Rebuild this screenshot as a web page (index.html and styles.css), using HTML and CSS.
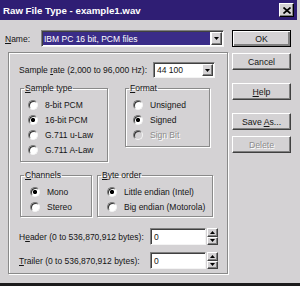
FILE: index.html
```html
<!DOCTYPE html>
<html lang="en">
<head>
    <meta charset="UTF-8">
    <title>Raw File Type</title>
    <link rel="stylesheet" href="styles.css">
</head>
<body>
    <div class="window">
        <div class="titlebar">
            <span class="title">Raw File Type - example1.wav</span>
            <span class="close">
                <svg width="8" height="7" viewBox="0 0 8 7"><path d="M0.5 0.5L7.5 6.5M7.5 0.5L0.5 6.5" stroke="#000" stroke-width="1.7"/></svg>
            </span>
        </div>
        <div class="content">
            <div class="main">
                <div class="name-row">
                    <span class="name-label"><u>N</u>ame:</span>
                    <div class="combo name-combo">
                        <span class="combo-text selected">IBM PC 16 bit, PCM files</span>
                        <span class="drop raised"><svg width="5" height="3" viewBox="0 0 5 3"><path d="M0 0h5L2.5 3z" fill="#000"/></svg></span>
                    </div>
                </div>

                <div class="panel">
                    <div class="rate-row">
                        <span class="rate-label">Sample <u>r</u>ate (2,000 to 96,000 Hz):</span>
                        <div class="combo rate-combo">
                            <span class="combo-text">44 100</span>
                            <span class="drop raised"><svg width="5" height="3" viewBox="0 0 5 3"><path d="M0 0h5L2.5 3z" fill="#000"/></svg></span>
                        </div>
                    </div>

                    <div class="group-row">
                        <fieldset class="group sample-type">
                            <legend><u>S</u>ample type</legend>
                            <div class="radio-row"><span class="radio"></span><span>8-bit PCM</span></div>
                            <div class="radio-row"><span class="radio on"></span><span>16-bit PCM</span></div>
                            <div class="radio-row"><span class="radio"></span><span>G.711 u-Law</span></div>
                            <div class="radio-row"><span class="radio"></span><span>G.711 A-Law</span></div>
                        </fieldset>
                        <fieldset class="group format">
                            <legend><u>F</u>ormat</legend>
                            <div class="radio-row"><span class="radio"></span><span>Unsigned</span></div>
                            <div class="radio-row"><span class="radio on"></span><span>Signed</span></div>
                            <div class="radio-row disabled"><span class="radio off"></span><span>Sign Bit</span></div>
                        </fieldset>
                    </div>

                    <div class="group-row second">
                        <fieldset class="group channels">
                            <legend><u>C</u>hannels</legend>
                            <div class="radio-row"><span class="radio on"></span><span>Mono</span></div>
                            <div class="radio-row"><span class="radio"></span><span>Stereo</span></div>
                        </fieldset>
                        <fieldset class="group byte-order">
                            <legend><u>B</u>yte order</legend>
                            <div class="radio-row"><span class="radio on"></span><span>Little endian (Intel)</span></div>
                            <div class="radio-row"><span class="radio"></span><span>Big endian (Motorola)</span></div>
                        </fieldset>
                    </div>

                    <div class="field-row header-row">
                        <span class="field-label">H<u>e</u>ader (0 to 536,870,912 bytes):</span>
                        <span class="field">0</span>
                        <div class="spin">
                            <span class="spin-btn raised"><svg width="5" height="3" viewBox="0 0 5 3"><path d="M0 3h5L2.5 0z" fill="#000"/></svg></span>
                            <span class="spin-btn raised"><svg width="5" height="3" viewBox="0 0 5 3"><path d="M0 0h5L2.5 3z" fill="#000"/></svg></span>
                        </div>
                    </div>
                    <div class="field-row trailer-row">
                        <span class="field-label"><u>T</u>railer (0 to 536,870,912 bytes):</span>
                        <span class="field">0</span>
                        <div class="spin">
                            <span class="spin-btn raised"><svg width="5" height="3" viewBox="0 0 5 3"><path d="M0 3h5L2.5 0z" fill="#000"/></svg></span>
                            <span class="spin-btn raised"><svg width="5" height="3" viewBox="0 0 5 3"><path d="M0 0h5L2.5 3z" fill="#000"/></svg></span>
                        </div>
                    </div>
                </div>
            </div>

            <div class="buttons">
                <span class="btn default"><span>OK</span></span>
                <span class="btn"><span>Cancel</span></span>
                <span class="btn spaced"><span><u>H</u>elp</span></span>
                <span class="btn spaced"><span>Save <u>A</u>s...</span></span>
                <span class="btn disabled"><span>Delete</span></span>
            </div>
        </div>
    </div>
</body>
</html>
```

FILE: styles.css
```css
* {
    box-sizing: border-box;
    margin: 0;
    padding: 0;
}

body {
    background-color: #d4d2d4;
    font-family: 'Liberation Sans', Arial, sans-serif;
    font-size: 8.5px;
    color: #151515;
}

.window {
    width: 300px;
    height: 286px;
    border-bottom: 3px solid #1c1c1c;
}

/* title bar */
.titlebar {
    height: 20px;
    margin-right: 3px;
    padding: 0 3px;
    background-color: #2f1e74;
    display: flex;
    align-items: center;
}

.title {
    flex: 1;
    padding-top: 1px;
    color: #fff;
    font-weight: bold;
    font-size: 9.7px;
}

.close {
    width: 15px;
    height: 14px;
    background-color: #d4d2d4;
    border: 1px solid;
    border-color: #fff #000 #000 #fff;
    box-shadow: inset -1px -1px 0 #808080;
    display: flex;
    align-items: center;
    justify-content: center;
}

/* shared bits */
.raised {
    background-color: #d4d2d4;
    border: 1px solid;
    border-color: #fff #404040 #404040 #fff;
    box-shadow: inset -1px -1px 0 #808080;
    display: flex;
    align-items: center;
    justify-content: center;
}

.combo,
.field {
    background-color: #fff;
    border: 1px solid;
    border-color: #808080 #f4f4f4 #f4f4f4 #808080;
    box-shadow: inset 1px 1px 0 #404040;
    padding: 1px;
    display: flex;
    align-items: center;
}

.combo-text {
    flex: 1;
    height: 100%;
    padding-left: 2px;
    display: flex;
    align-items: center;
}

.selected {
    background-color: #3a2c88;
    color: #fff;
    margin-right: 1px;
    padding-left: 1px;
}

.drop {
    width: 11px;
    height: 100%;
}

.disabled {
    color: #8c8c8c;
    text-shadow: 1px 1px 0 #fff;
}

/* layout */
.content {
    display: flex;
    padding: 10px 0 0 5px;
}

.main {
    width: 223px;
}

.name-row {
    display: flex;
    align-items: center;
    height: 17px;
}

.name-label {
    width: 36px;
}

.name-combo {
    width: 183px;
    height: 17px;
}

.panel {
    width: 220px;
    height: 222px;
    margin: 5px 0 0 3px;
    padding: 9px 0 0 10px;
    border: 1px solid #8a8a8a;
    box-shadow: inset 1px 1px 0 #fff, 1px 1px 0 #fff;
}

.rate-row {
    display: flex;
    align-items: center;
    height: 16px;
}

.rate-label {
    width: 134px;
}

.rate-combo {
    width: 62px;
    height: 16px;
}

.group-row {
    display: flex;
    align-items: flex-start;
    margin: 5px 0 0 1px;
}

.group-row.second {
    margin-top: 8px;
}

.group {
    min-width: 0;
    padding: 4px 0 4px 3px;
    border: 1px solid #8a8a8a;
    box-shadow: inset 1px 1px 0 #fff, 1px 1px 0 #fff;
}

.group legend {
    padding: 0 1px;
    line-height: 10px;
}

.sample-type {
    width: 88px;
}

.format {
    width: 85px;
    margin-left: 17px;
}

.channels {
    width: 72px;
    padding-bottom: 2px;
}

.byte-order {
    width: 116px;
    margin-left: 5px;
    padding-bottom: 2px;
}

.radio-row {
    display: flex;
    align-items: center;
    height: 15px;
    margin-left: 4px;
    white-space: nowrap;
}

.channels .radio-row,
.byte-order .radio-row {
    margin-left: 6px;
}

.radio {
    flex: none;
    width: 10px;
    height: 10px;
    margin-right: 7px;
    border-radius: 50%;
    background: #fff;
    border: 1px solid;
    border-color: #7a7a7a #f4f4f4 #f4f4f4 #7a7a7a;
    box-shadow: inset 1px 1px 0 #303030;
}

.radio.on {
    background: radial-gradient(circle, #000 0 1.8px, #fff 2.4px);
}

.radio.off {
    background: #d4d2d4;
}

.field-row {
    display: flex;
    align-items: center;
    height: 17px;
}

.header-row {
    margin-top: 11px;
}

.trailer-row {
    margin-top: 7px;
}

.field-label {
    width: 131px;
}

.field {
    width: 56px;
    height: 17px;
    padding-left: 3px;
}

.spin {
    width: 11px;
    height: 17px;
    margin-left: 1px;
    display: flex;
    flex-direction: column;
}

.spin-btn {
    flex: 1;
}

/* buttons on the right */
.buttons {
    width: 59px;
    margin-left: 4px;
    display: flex;
    flex-direction: column;
}

.btn {
    height: 17px;
    font-size: 8.7px;
    background-color: #d4d2d4;
    border: 1px solid;
    border-color: #fff #404040 #404040 #fff;
    box-shadow: inset -1px -1px 0 #808080;
    display: flex;
    align-items: center;
    justify-content: center;
}

.btn + .btn {
    margin-top: 6px;
}

.btn.spaced {
    margin-top: 13px;
}

.btn.default {
    border-color: #000;
    box-shadow: inset 1px 1px 0 #fff, inset -2px -2px 0 #808080;
}
```
